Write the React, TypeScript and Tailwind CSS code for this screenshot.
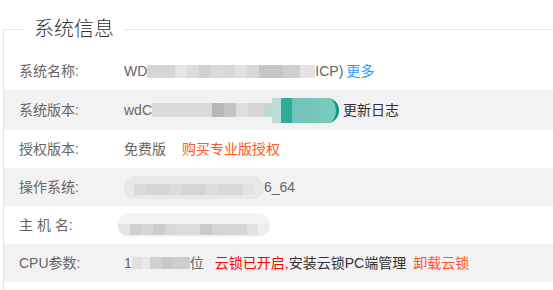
const FONT = "font-['Liberation_Sans','Noto_Sans_CJK_SC',sans-serif]";

type Cell = [number, string];

function Mosaic({ cells, h = 13, className = '' }: { cells: Cell[]; h?: number; className?: string }) {
  return (
    <span className={`inline-flex ${className}`} style={{ height: h }}>
      {cells.map(([w, c], i) => (
        <span key={i} className="block h-full" style={{ width: w, background: c }} />
      ))}
    </span>
  );
}

function Row({ label, gray, tall, children }: { label: string; gray?: boolean; tall?: boolean; children: React.ReactNode }) {
  return (
    <div className={`flex items-center pl-[15px] ${tall ? 'h-[40px]' : 'h-[38px]'} ${gray ? 'bg-[#f2f2f2]' : ''}`}>
      <div className="w-[105px] shrink-0 text-[#666]">{label}</div>
      <div className="flex items-center text-[#666] whitespace-nowrap">{children}</div>
    </div>
  );
}

export default function App() {
  return (
    <div className={`w-[553px] h-[290px] overflow-hidden bg-white text-[14px] ${FONT}`}>
      <fieldset className="ml-[3px] mt-[17px] w-[600px] border border-[#e6e6e6] pb-[10px]">
        <legend className="ml-[20px] px-[10px] text-[20px] leading-[24px] font-light text-[#333]">系统信息</legend>
        <div className="pt-[11px]">
          <Row label="系统名称:">
            <span>WD</span>
            <Mosaic cells={[[28, '#d6d6d6'], [12, '#e6e6e6'], [12, '#dcdcdc'], [12, '#d2d2d2'], [12, '#dadada'], [12, '#d8d8d8'], [12, '#e0e0e0'], [12, '#d8d8d8'], [24, '#c6c6c6'], [17, '#cfcfcf'], [15, '#e4e4e4']]} />
            <span>ICP)</span>
            <span className="ml-[3px] text-[#1e9fff]">更多</span>
          </Row>
          <Row label="系统版本:" gray tall>
            <span>wdC</span>
            <Mosaic h={14} cells={[[60, '#dadada'], [12, '#b8b8b8'], [12, '#c4c4c4'], [12, '#dedede'], [16, '#d6d6d6'], [8, '#c2d6d3']]} />
            <span className="block w-[67px] h-[25px] rounded-r-[12px] border-r-[3px] border-[#109a88] bg-[linear-gradient(90deg,#bcdcd8_0%,#bcdcd8_14%,#2eab9b_14%,#2eab9b_32%,#6ec3b7_32%,#7ccabd_100%)]" />
            <span className="ml-[4px] text-[#333]">更新日志</span>
          </Row>
          <Row label="授权版本:">
            <span>免费版</span>
            <span className="ml-[16px] text-[#ff5722]">购买专业版授权</span>
          </Row>
          <Row label="操作系统:" gray>
            <span className="flex items-end h-[23px] w-[140px] rounded-full bg-[#e8e8e8] pb-[4px] pl-[10px]">
              <Mosaic h={11} cells={[[12, '#dadada'], [24, '#d6d6d6'], [12, '#dcdcdc'], [24, '#d4d4d4'], [12, '#dddddd'], [24, '#d8d8d8'], [12, '#e2e2e2']]} />
            </span>
            <span>6_64</span>
          </Row>
          <Row label="主 机 名:">
            <span className="-ml-[6px] flex flex-col w-[152px] h-[24px] rounded-full bg-[#f3f3f3] overflow-hidden">
              <span className="h-[11px]" />
              <Mosaic h={11} cells={[[12, '#e4e4e4'], [12, '#d0d0d0'], [12, '#d6d6d6'], [12, '#cccccc'], [12, '#d8d8d8'], [24, '#dcdcdc'], [12, '#cacaca'], [12, '#d4d4d4'], [24, '#d6d6d6'], [12, '#e2e2e2'], [12, '#eeeeee']]} />
            </span>
          </Row>
          <Row label="CPU参数:" gray>
            <span>1</span>
            <Mosaic h={12} cells={[[10, '#e0e0e0'], [8, '#e8e8e8'], [12, '#d0d0d0'], [10, '#c8c8c8'], [18, '#cdcdcd']]} />
            <span>位</span>
            <span className="ml-[11px] text-[#ff0000]">云锁已开启,</span>
            <span className="text-[#333]">安装云锁PC端管理</span>
            <span className="ml-[7px] text-[#ff5722]">卸载云锁</span>
          </Row>
        </div>
      </fieldset>
    </div>
  );
}
